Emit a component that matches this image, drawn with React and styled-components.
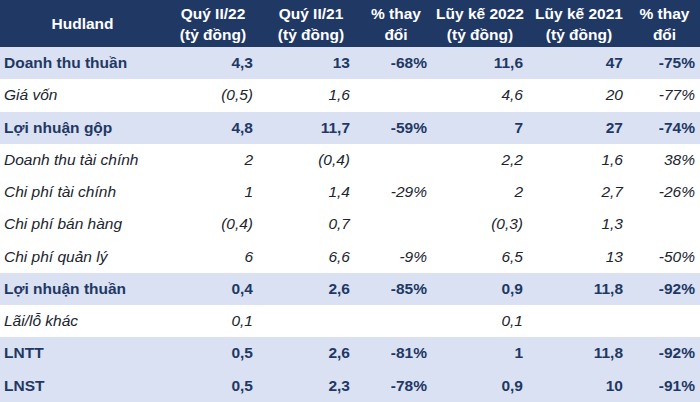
import { createGlobalStyle, styled } from "styled-components";

const GlobalStyle = createGlobalStyle`
  html, body {
    margin: 0;
    padding: 0;
    background: #fff;
  }
  body {
    font-family: "Liberation Sans", Arial, sans-serif;
  }
`;

const columns = [
  { width: 165, pad: 4 },
  { width: 96, pad: 8 },
  { width: 100, pad: 11 },
  { width: 70, pad: 4 },
  { width: 98, pad: 6 },
  { width: 100, pad: 6 },
  { width: 71, pad: 5 },
];

const template = columns.map((c) => `${c.width}px`).join(" ");

const Table = styled.div`
  width: 700px;
  height: 402px;
  display: flex;
  flex-direction: column;
`;

const HeaderRow = styled.div`
  display: grid;
  grid-template-columns: ${template};
  height: 47px;
  background: #1f3864;
  color: #fff;
  font-weight: bold;
  font-size: 15.5px;
  line-height: 21px;
`;

const HeadCell = styled.div`
  display: flex;
  align-items: center;
  justify-content: center;
  text-align: center;
  white-space: nowrap;
`;

const Row = styled.div`
  display: grid;
  grid-template-columns: ${template};
  height: 32.25px;
  align-items: center;
  font-size: 15.5px;
  background: ${(p) => (p.$main ? "#d9e1f2" : "#fff")};
  color: ${(p) => (p.$main ? "#1f3864" : "#20242e")};
  font-weight: ${(p) => (p.$main ? "bold" : "normal")};
  font-style: ${(p) => (p.$main ? "normal" : "italic")};
`;

const Label = styled.div`
  padding-left: 4px;
  white-space: nowrap;
`;

const Value = styled.div`
  text-align: right;
  padding-right: ${(p) => p.$pad}px;
  white-space: nowrap;
`;

const headers = [
  ["Hudland"],
  ["Quý II/22", "(tỷ đồng)"],
  ["Quý II/21", "(tỷ đồng)"],
  ["% thay", "đổi"],
  ["Lũy kế 2022", "(tỷ đồng)"],
  ["Lũy kế 2021", "(tỷ đồng)"],
  ["% thay", "đổi"],
];

const rows = [
  { main: true, cells: ["Doanh thu thuần", "4,3", "13", "-68%", "11,6", "47", "-75%"] },
  { cells: ["Giá vốn", "(0,5)", "1,6", "", "4,6", "20", "-77%"] },
  { main: true, cells: ["Lợi nhuận gộp", "4,8", "11,7", "-59%", "7", "27", "-74%"] },
  { cells: ["Doanh thu tài chính", "2", "(0,4)", "", "2,2", "1,6", "38%"] },
  { cells: ["Chi phí tài chính", "1", "1,4", "-29%", "2", "2,7", "-26%"] },
  { cells: ["Chi phí bán hàng", "(0,4)", "0,7", "", "(0,3)", "1,3", ""] },
  { cells: ["Chi phí quản lý", "6", "6,6", "-9%", "6,5", "13", "-50%"] },
  { main: true, cells: ["Lợi nhuận thuần", "0,4", "2,6", "-85%", "0,9", "11,8", "-92%"] },
  { cells: ["Lãi/lỗ khác", "0,1", "", "", "0,1", "", ""] },
  { main: true, cells: ["LNTT", "0,5", "2,6", "-81%", "1", "11,8", "-92%"] },
  { main: true, cells: ["LNST", "0,5", "2,3", "-78%", "0,9", "10", "-91%"] },
];

export default function App() {
  return (
    <>
      <GlobalStyle />
      <Table>
        <HeaderRow>
          {headers.map((lines, i) => (
            <HeadCell key={i}>
              <div>
                {lines.map((l) => (
                  <div key={l}>{l}</div>
                ))}
              </div>
            </HeadCell>
          ))}
        </HeaderRow>
        {rows.map((r) => (
          <Row key={r.cells[0]} $main={r.main}>
            <Label>{r.cells[0]}</Label>
            {r.cells.slice(1).map((v, i) => (
              <Value key={i} $pad={columns[i + 1].pad}>
                {v}
              </Value>
            ))}
          </Row>
        ))}
      </Table>
    </>
  );
}
